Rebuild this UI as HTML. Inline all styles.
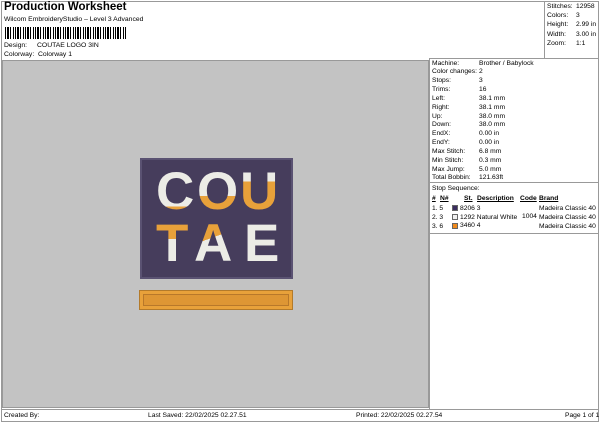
<!DOCTYPE html>
<html><head><style>
*{margin:0;padding:0;box-sizing:border-box}
body{width:600px;height:424px;background:#fff;font-family:"Liberation Sans",sans-serif;color:#000;position:relative;overflow:hidden;font-size:7px}
.a{position:absolute;white-space:nowrap}
.frame{position:absolute;left:1px;top:1px;width:598px;height:421px;border:1px solid #999}
.canvas{position:absolute;left:2px;top:60px;width:427px;height:348px;background:#c3c3c3;border:1px solid #999}
.L{position:absolute;font-size:53px;font-weight:bold;line-height:52px;-webkit-background-clip:text;background-clip:text;color:transparent}
</style></head><body>
<div class="frame"></div>
<div class="a" style="left:4px;top:1px;font-size:11.5px;font-weight:bold">Production Worksheet</div>
<div class="a" style="left:4px;top:16px;font-size:6.8px">Wilcom EmbroideryStudio – Level 3 Advanced</div>
<div class="a" style="left:5px;top:27px;width:121px;height:12px;background:repeating-linear-gradient(90deg,#000 0 1px,#fff 1px 2px,#000 2px 4px,#fff 4px 5px,#000 5px 6px,#fff 6px 8px,#000 8px 9px,#fff 9px 10px)"></div>
<div class="a" style="left:4px;top:42px;font-size:6.8px">Design:</div>
<div class="a" style="left:37px;top:42px;font-size:6.8px">COUTAE LOGO 3IN</div>
<div class="a" style="left:4px;top:51px;font-size:6.8px">Colorway:&nbsp; Colorway 1</div>
<div class="canvas"></div>
<div class="a" style="left:429px;top:58px;width:170px;height:1px;background:#999"></div>
<div class="a" style="left:429px;top:58px;width:1px;height:351px;background:#999"></div>
<div class="a" style="left:544px;top:1px;width:1px;height:58px;background:#999"></div>
<div class="a" style="left:429px;top:182px;width:170px;height:1px;background:#999"></div>
<div class="a" style="left:429px;top:233px;width:170px;height:1px;background:#999"></div>
<div class="a" style="left:547px;top:2px;font-size:6.7px;line-height:9.2px">Stitches:<br>Colors:<br>Height:<br>Width:<br>Zoom:</div>
<div class="a" style="left:576px;top:2px;font-size:6.7px;line-height:9.2px">12958<br>3<br>2.99 in<br>3.00 in<br>1:1</div>
<div class="a" style="left:432px;top:59.5px;font-size:6.7px;line-height:8.85px">Machine:<br>Color changes:<br>Stops:<br>Trims:<br>Left:<br>Right:<br>Up:<br>Down:<br>EndX:<br>EndY:<br>Max Stitch:<br>Min Stitch:<br>Max Jump:<br>Total Bobbin:</div>
<div class="a" style="left:432px;top:185px;font-size:6.7px">Stop Sequence:</div>
<div class="a" style="left:479px;top:59.5px;font-size:6.7px;line-height:8.85px">Brother / Babylock<br>2<br>3<br>16<br>38.1 mm<br>38.1 mm<br>38.0 mm<br>38.0 mm<br>0.00 in<br>0.00 in<br>6.8 mm<br>0.3 mm<br>5.0 mm<br>121.63ft</div>
<div class="a" style="left:432px;top:195px;font-size:6.7px;font-weight:bold;text-decoration:underline">#</div>
<div class="a" style="left:440px;top:195px;font-size:6.7px;font-weight:bold;text-decoration:underline">N#</div>
<div class="a" style="left:464px;top:195px;font-size:6.7px;font-weight:bold;text-decoration:underline">St.</div>
<div class="a" style="left:477px;top:195px;font-size:6.7px;font-weight:bold;text-decoration:underline">Description</div>
<div class="a" style="left:520px;top:195px;font-size:6.7px;font-weight:bold;text-decoration:underline">Code</div>
<div class="a" style="left:539px;top:195px;font-size:6.7px;font-weight:bold;text-decoration:underline">Brand</div>
<div class="a" style="left:432px;top:204px;font-size:6.7px;line-height:9px">1. 5<br>2. 3<br>3. 6</div>
<div class="a" style="left:452px;top:205px;width:6px;height:6px;background:#3a2d5e;border:1px solid #666"></div>
<div class="a" style="left:452px;top:214px;width:6px;height:6px;background:#f0f0f0;border:1px solid #666"></div>
<div class="a" style="left:452px;top:223px;width:6px;height:6px;background:#f08a1c;border:1px solid #666"></div>
<div class="a" style="left:460px;top:204px;font-size:6.7px;line-height:9px">8206 3<br>1292 Natural White</div>
<div class="a" style="left:460px;top:222px;font-size:6.7px">3460 4</div>
<div class="a" style="left:522px;top:213px;font-size:6.7px">1004</div>
<div class="a" style="left:539px;top:204px;font-size:6.7px;line-height:9px">Madeira Classic 40<br>Madeira Classic 40<br>Madeira Classic 40</div>
<div class="a" style="left:2px;top:409px;width:597px;height:1px;background:#999"></div>
<div class="a" style="left:4px;top:412px;font-size:6.7px">Created By:</div>
<div class="a" style="left:148px;top:412px;font-size:6.7px">Last Saved: 22/02/2025 02.27.51</div>
<div class="a" style="left:356px;top:412px;font-size:6.7px">Printed: 22/02/2025 02.27.54</div>
<div class="a" style="left:565px;top:412px;font-size:6.7px">Page 1 of 1</div>
<!-- logo -->
<div class="a" style="left:140px;top:158px;width:153px;height:121px;background:#463d5c;border:2px solid #5a5272"></div>
<div class="L" style="left:156px;top:166px;background-image:linear-gradient(180deg,#ecece6 0 78%,#e8a13a 78%)">C</div>
<div class="L" style="left:197px;top:166px;background-image:linear-gradient(180deg,#ecece6 0 58%,#e8a13a 58%)">O</div>
<div class="L" style="left:240px;top:166px;background-image:linear-gradient(180deg,#ecece6 0 30%,#e8a13a 30%)">U</div>
<div class="L" style="left:156px;top:218px;background-image:linear-gradient(180deg,#e8a13a 0 40%,#ecece6 40%)">T</div>
<div class="L" style="left:194px;top:218px;background-image:linear-gradient(160deg,#e8a13a 0 40%,#ecece6 40%)">A</div>
<div class="L" style="left:244px;top:218px;background-image:linear-gradient(180deg,#ecece6 0 100%)">E</div>
<div class="a" style="left:139px;top:290px;width:154px;height:20px;background:#e8a13a;border:1px solid #b37a2a"></div>
<div class="a" style="left:143px;top:294px;width:146px;height:12px;border:1px solid #b8782a;background:#de9634"></div>
</body></html>
